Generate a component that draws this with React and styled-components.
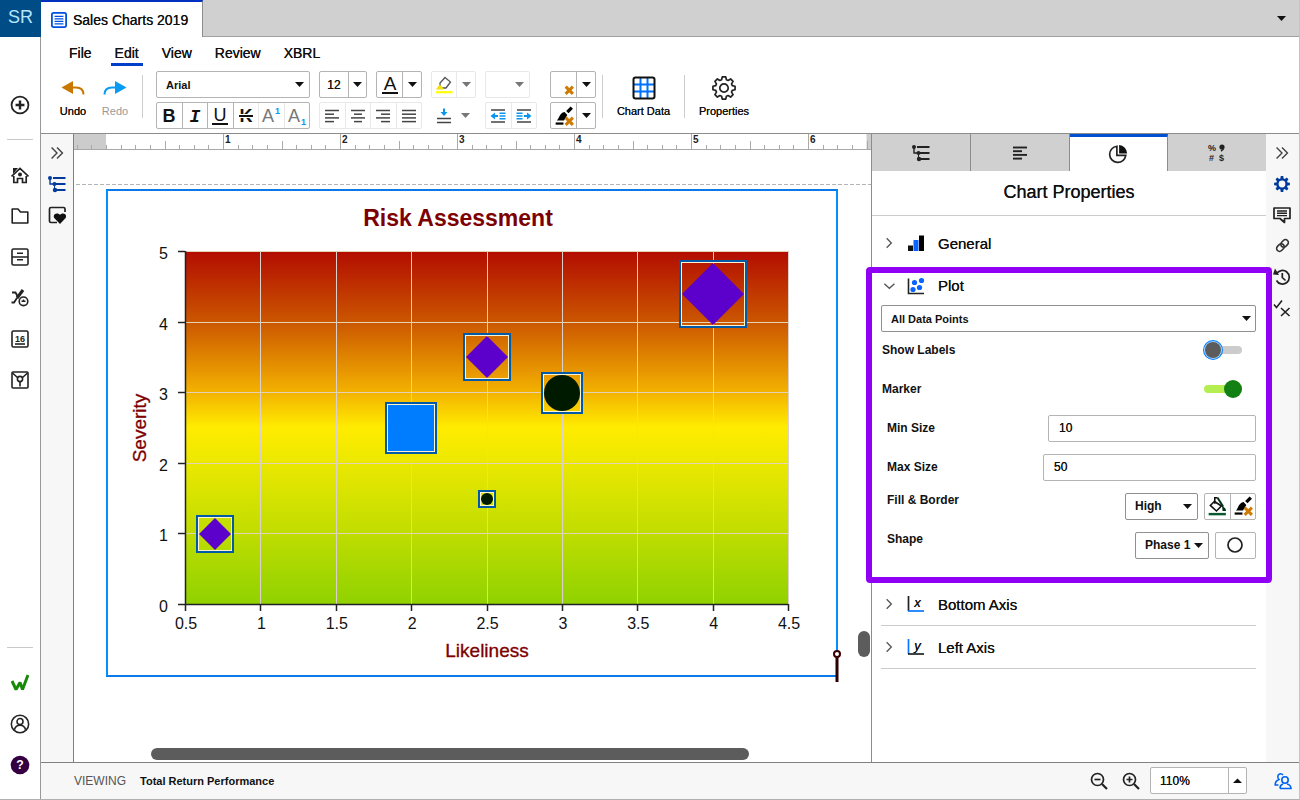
import styled, { createGlobalStyle, css } from 'styled-components';

const GlobalStyle = createGlobalStyle`
  * { box-sizing: border-box; }
  body {
    margin: 0;
    font-family: "Liberation Sans", Arial, sans-serif;
    font-size: 12px;
    color: #111;
    background: #fff;
  }
  button, input, select {
    font: inherit;
    color: inherit;
    margin: 0;
    padding: 0;
    border: 0;
    background: none;
  }
  svg { display: block; flex: none; }
`;

const crisp = css`
  text-shadow: 0 0 0 currentColor;
`;

/* ---------- shell ---------- */

const Shell = styled.div`
  display: flex;
  min-height: 100vh;
  border-right: 1px solid #c4c4c4;
  border-bottom: 1px solid #b0b0b0;
`;

const SideNav = styled.nav`
  width: 41px;
  flex: none;
  display: flex;
  flex-direction: column;
  border-right: 1px solid #999;
`;

const Logo = styled.div`
  width: 41px;
  height: 37px;
  padding-bottom: 2px;
  display: flex;
  align-items: center;
  justify-content: center;
  background: #004c86;
  color: #b4e6ff;
  font-size: 18px;
`;

const NavGroup = styled.div`
  display: flex;
  flex-direction: column;
  align-items: center;
  padding: ${p => p.$pad || '0'};
  margin-top: ${p => (p.$bottom ? 'auto' : '0')};
`;

const NavButton = styled.button`
  width: 40px;
  height: 41px;
  display: flex;
  align-items: center;
  justify-content: center;
`;

const NavRule = styled.hr`
  width: 26px;
  margin: 0;
  border: 0;
  border-top: 1px solid #c8c8c8;
`;

const Main = styled.div`
  flex: 1;
  min-width: 0;
  display: flex;
  flex-direction: column;
`;

/* ---------- document tabs ---------- */

const DocBar = styled.div`
  height: 37px;
  display: flex;
  justify-content: space-between;
  background: #d0d0d0;
`;

const DocTab = styled.div`
  display: flex;
  align-items: center;
  gap: 6px;
  padding: 0 10px;
  width: 162px;
  background: #fff;
  border-top: 2px solid #0030c0;
  border-right: 1px solid #8c8c8c;
  font-size: 14px;
  white-space: nowrap;
  ${crisp}
`;

const DocSpace = styled.div`
  flex: 1;
  display: flex;
  justify-content: flex-end;
  border-bottom: 1px solid #a0a0a0;
`;

const DocMenu = styled.button`
  width: 35px;
  display: flex;
  align-items: center;
  justify-content: center;
`;

/* ---------- menu + toolbar ---------- */

const MenuBar = styled.nav`
  display: flex;
  gap: 15px;
  padding: 5px 24px 0;
`;

const MenuItem = styled.button`
  height: 24px;
  padding: 0 4px;
  font-size: 14px;
  border-bottom: 3px solid ${p => (p.$active ? '#0040c8' : 'transparent')};
  ${crisp}
`;

const Toolbar = styled.div`
  display: flex;
  align-items: flex-start;
  padding: 5px 11px 4px;
  border-bottom: 1px solid #8c8c8c;
`;

const Tool = styled.button`
  width: ${p => p.$w}px;
  height: 58px;
  padding-top: 5px;
  display: flex;
  flex-direction: column;
  align-items: center;
  gap: 4px;
  font-size: 11px;
  line-height: 14px;
  color: ${p => (p.$off ? '#999' : '#111')};
  white-space: nowrap;
  ${p => !p.$off && crisp}
`;

const Divider = styled.div`
  width: 1px;
  height: 43px;
  margin: ${p => p.$m};
  background: #ccc;
`;

const Columns = styled.div`
  display: flex;
  gap: 9px;
`;

const Column = styled.div`
  width: ${p => p.$w}px;
  display: flex;
  flex-direction: column;
  gap: 4px;
  margin-left: ${p => (p.$gap ? '4px' : '0')};
`;

const Pair = styled.div`
  display: flex;
  justify-content: space-between;
`;

const Group = styled.div`
  width: ${p => (p.$w ? p.$w + 'px' : '100%')};
  height: 27px;
  display: flex;
  border: 1px solid ${p => (p.$plain ? 'transparent' : p.$off ? '#e8e8e8' : '#b4b4b4')};
  border-radius: 2px;
  background: #fff;
`;

const Cell = styled.button`
  flex: ${p => (p.$w ? 'none' : 1)};
  width: ${p => (p.$w ? p.$w + 'px' : 'auto')};
  min-width: 0;
  display: flex;
  align-items: center;
  justify-content: center;
  border-left: ${p => (p.$open ? '0' : '1px')} solid ${p => (p.$off ? '#e8e8e8' : '#b4b4b4')};
  &:first-child { border-left: 0; }
`;

const SizeInput = styled.input`
  width: 28px;
  text-align: center;
  ${crisp}
`;

const SelectBox = styled.div`
  display: flex;
  align-items: center;
  width: ${p => (p.$w ? p.$w + 'px' : '100%')};
  height: 27px;
  padding-right: ${p => p.$end || 5}px;
  border: 1px solid ${p => p.$line || '#b4b4b4'};
  border-radius: 2px;
  background: #fff;
  select {
    appearance: none;
    flex: 1;
    min-width: 0;
    height: 100%;
    padding-left: 9px;
    font-weight: bold;
    font-size: ${p => p.$size || 11}px;
    outline: 0;
  }
`;

/* ---------- workspace ---------- */

const Workspace = styled.div`
  flex: 1;
  display: flex;
`;

const SlimRail = styled.aside`
  width: 33px;
  flex: none;
  padding-top: 3px;
  background: #f7f7f7;
  border-right: ${p => (p.$line ? '1px solid #808080' : '0')};
`;

const SlimButton = styled.button`
  width: 32px;
  height: 31px;
  display: flex;
  align-items: center;
  justify-content: center;
`;

const Canvas = styled.main`
  flex: 1;
  min-width: 0;
  position: relative;
  overflow: hidden;
`;

const RulerBox = styled.div`
  height: 16px;
  overflow: hidden;
  border-bottom: 1px solid #a8a8a8;
`;

const PageEdge = styled.div`
  height: 1px;
  margin-top: 34px;
  background: repeating-linear-gradient(90deg, #fff 0 2px, #b4b4b4 2px 6px);
`;

const Frame = styled.section`
  position: relative;
  width: 732px;
  margin: 4px 0 0 32px;
  border: 2px solid #0090ff;
  border-top-color: #0a7ae8;
  border-bottom-color: #0a7ae8;
`;

const Caret = styled.svg`
  position: absolute;
  right: -6px;
  bottom: -7px;
`;

const ScrollThumb = styled.div`
  position: absolute;
  border-radius: 6px;
  background: #5c5c5c;
  ${p => (p.$vertical
    ? 'right: 1px; bottom: 105px; width: 12px; height: 26px;'
    : 'left: 77px; right: 122px; bottom: 2px; height: 12px;')}
`;

/* ---------- properties panel ---------- */

const Panel = styled.aside`
  width: 395px;
  flex: none;
  border-left: 1px solid #8c8c8c;
`;

const PanelTabs = styled.div`
  display: flex;
  height: 37px;
`;

const PanelTab = styled.button`
  flex: 1;
  display: flex;
  align-items: center;
  justify-content: center;
  background: ${p => (p.$active ? '#fff' : '#d0d0d0')};
  border-top: ${p => (p.$active ? '3px solid #0050d0' : '0')};
  border-right: 1px solid #8c8c8c;
  &:last-child { border-right: 0; }
`;

const PanelTitle = styled.h2`
  height: 45px;
  margin: 0;
  display: flex;
  align-items: center;
  justify-content: center;
  padding-bottom: 2px;
  font-size: 18px;
  font-weight: normal;
  border-bottom: 1px solid #ccc;
  ${crisp}
`;

const PanelBody = styled.div`
  padding-top: 6px;
`;

const SectionHead = styled.button`
  width: calc(100% - 19px);
  height: ${p => (p.$open ? 32 : 43)}px;
  margin: 0 10px 0 9px;
  padding-bottom: ${p => (p.$open ? 6 : 0)}px;
  display: flex;
  align-items: center;
  font-size: 15px;
  border-bottom: 1px solid ${p => (p.$line ? '#ccc' : 'transparent')};
  ${crisp}
  svg:first-child { margin: 0 11px 0 1px; }
  svg + svg { margin-right: 13px; }
`;

const Highlight = styled.section`
  position: relative;
  z-index: 1;
  margin: 2px -6px 0;
  padding-bottom: 11px;
  border: 6px solid #9000f5;
  border-radius: 4px;
`;

const Fields = styled.div`
  padding: 0 10px 0 9px;
`;

const Field = styled.div`
  display: flex;
  align-items: center;
  justify-content: space-between;
  height: 39px;
  padding-bottom: 3px;
  padding-left: ${p => (p.$nested ? 6 : 1)}px;
`;

const FieldLabel = styled.label`
  font-weight: bold;
  padding-bottom: ${p => (p.$raised ? 12 : 0)}px;
`;

const Controls = styled.div`
  display: flex;
  gap: 6px;
`;

const TextInput = styled.input`
  width: ${p => p.$w}px;
  height: 27px;
  padding: 0 10px;
  border: 1px solid #b4b4b4;
  border-radius: 2px;
  ${crisp}
`;

const Switch = styled.input`
  appearance: none;
  position: relative;
  width: 38px;
  height: 8px;
  margin-right: 14px;
  border-radius: 4px;
  background: #ccc;
  &::before {
    content: '';
    position: absolute;
    top: -4px;
    left: 1px;
    width: 16px;
    height: 16px;
    border-radius: 50%;
    background: #5c5c5c;
    box-shadow: 0 0 0 1px #a8d4ff, 0 0 0 2px #0080ff;
  }
  &:checked { background: #b4ee50; }
  &:checked::before {
    top: -5px;
    left: 20px;
    width: 18px;
    height: 18px;
    background: #128012;
    box-shadow: none;
  }
`;

/* ---------- status bar ---------- */

const StatusBar = styled.footer`
  height: 37px;
  display: flex;
  align-items: center;
  padding: 0 0 1px 33px;
  background: #f7f7f7;
  border-top: 1px solid #808080;
`;

const Mode = styled.span`
  color: #555;
  margin-right: 14px;
`;

const DocName = styled.span`
  flex: 1;
  font-size: 11px;
  font-weight: bold;
`;

const IconButton = styled.button`
  width: 32px;
  height: 27px;
  display: flex;
  align-items: center;
  justify-content: center;
`;

const ZoomInput = styled.input`
  width: 77px;
  padding-left: 9px;
  ${crisp}
`;

const ZoomBox = styled.div`
  display: flex;
  margin: 0 20px 0 3px;
`;

/* ---------- icons ---------- */

function Icon({ size = 18, children, color = '#222', width = 2 }) {
  return (
    <svg width={size} height={size} viewBox="0 0 18 18" fill="none" stroke={color} strokeWidth={width} aria-hidden="true">
      {children}
    </svg>
  );
}

const Down = ({ color = '#111', up }) => (
  <svg width="9" height="5" viewBox="0 0 9 5" aria-hidden="true">
    <path d={up ? 'M0 5L4.5 0.5L9 5Z' : 'M0 0H9L4.5 5Z'} fill={color} />
  </svg>
);

const PlusIcon = () => (
  <Icon size={20}><circle cx="9" cy="9" r="7.6" strokeWidth="1.6" /><path d="M9 5V13M5 9H13" strokeWidth="2.2" /></Icon>
);

const HomeIcon = () => (
  <Icon width={1.7}>
    <path d="M0.5 10.5L9 2.5L17.5 10.5M2.8 10V16.5H6.5V12.5H11.5V16.5H15.2V10" />
    <path d="M2 2H7L2 8Z" fill="#222" stroke="none" />
    <circle cx="9" cy="8.5" r="2" fill="#222" stroke="none" />
  </Icon>
);

const FolderIcon = () => (
  <Icon width={1.6}><path d="M1.2 2H7L9.5 5H16.8V16H1.2Z" strokeLinejoin="round" /></Icon>
);

const DrawerIcon = () => (
  <Icon width={1.6}>
    <rect x="1" y="1" width="16" height="16" rx="1.5" />
    <path d="M1 9H17M6 5.3H12M6 11.7H12" />
  </Icon>
);

const TaskIcon = () => (
  <Icon width={1.8}>
    <path d="M1 3.5H4.5L7.5 9M6 9L3 13.5H0.5" />
    <path d="M12 1L6 9" strokeWidth="3.2" />
    <circle cx="12.5" cy="12.3" r="4.3" strokeWidth="1.6" />
    <path d="M10.5 12.3H14.5M12.5 10.5V12.5" strokeWidth="1.4" />
  </Icon>
);

const CalendarIcon = () => (
  <Icon width={1.6}>
    <rect x="1" y="1" width="16" height="16" rx="1.5" />
    <path d="M4 14H14" />
    <text x="9" y="11.5" fontSize="9" fontWeight="bold" textAnchor="middle" fill="#222" stroke="none">16</text>
  </Icon>
);

const MailIcon = () => (
  <Icon width={1.6}>
    <rect x="1" y="1" width="16" height="16" rx="1" />
    <path d="M1.5 2L6.5 6.5M16.5 2L11.5 6.5M9 10.5V15.5" />
    <circle cx="9" cy="8" r="2.6" />
  </Icon>
);

const WIcon = () => (
  <Icon color="#188a08" width={3}><path d="M1 7L5 15.5L9 8.5L11.5 15.5L17 1" strokeLinejoin="bevel" /></Icon>
);

const UserIcon = () => (
  <Icon size={20} width={1.4}>
    <circle cx="9" cy="9" r="7.8" />
    <circle cx="9" cy="6.8" r="2.7" />
    <path d="M4 14.2C4.8 11 7 10.2 9 10.2S13.2 11 14 14.2" />
  </Icon>
);

const HelpIcon = () => (
  <Icon size={20}>
    <circle cx="9" cy="9" r="8.4" fill="#350042" stroke="none" />
    <text x="9" y="13" fontSize="11" fontWeight="bold" textAnchor="middle" fill="#fff" stroke="none">?</text>
  </Icon>
);

const DocIcon = () => (
  <Icon size={16} color="#0050e0" width={1.5}>
    <rect x="1" y="1" width="16" height="16" rx="2" strokeWidth="2" />
    <path d="M4 5H14M4 7.8H14M4 10.6H14M4 13.4H14" />
  </Icon>
);

const UndoIcon = ({ flip, color }) => (
  <svg width="24" height="24" viewBox="0 0 24 24" aria-hidden="true">
    <g transform={flip ? 'matrix(-1 0 0 1 24 0)' : undefined}>
      <path d="M0.5 11.5L12 5V18Z" fill={color} />
      <path d="M11 11.5H15C19.5 11.5 22.5 14 22.5 18.5" fill="none" stroke={color} strokeWidth="2" />
    </g>
  </svg>
);

const Chevrons = () => (
  <Icon size={14} width={1.8} color="#444"><path d="M2 2L9 9L2 16M9 2L16 9L9 16" /></Icon>
);

const TreeIcon = ({ color = '#222' }) => (
  <Icon color={color} width={2}>
    <path d="M5 3H17.5M8 9H17.5M9 15H17.5" />
    <path d="M2 3V9H6" strokeWidth="1.4" />
    <path d="M6.5 9V15" strokeWidth="1" />
    <g fill={color} stroke="none">
      <circle cx="2" cy="3" r="2" />
      <circle cx="6.5" cy="9" r="2" />
      <circle cx="7" cy="15" r="2.2" />
    </g>
  </Icon>
);

const HeartIcon = () => (
  <Icon width={1.7}>
    <path d="M17 6V3Q17 1.5 15.5 1.5H3Q1.5 1.5 1.5 3V15Q1.5 16.5 3 16.5H9" />
    <path d="M12 18L6.2 12C4.2 8.2 9 5.8 12 8.8C15 5.8 19.6 8.2 17.6 12Z" fill="#111" stroke="none" />
  </Icon>
);

const lineSets = {
  left: [[2, 16], [2, 11], [2, 16], [2, 11]],
  center: [[2, 16], [5, 13], [2, 16], [5, 13]],
  right: [[2, 16], [7, 16], [2, 16], [7, 16]],
  full: [[2, 16], [2, 16], [2, 16], [2, 16]],
};

const Lines = ({ kind, color = '#444', width = 1.5 }) => (
  <Icon color={color} width={width}>
    {lineSets[kind].map(([a, b], i) => (
      <path key={i} d={`M${a} ${3.5 + i * 3.7}H${b}`} />
    ))}
  </Icon>
);

const LetterIcon = ({ text, bold, underline, strike, sup, sub, italic, size = 18, color = '#111' }) => (
  <svg width="22" height="22" viewBox="0 0 22 22" aria-hidden="true">
    <text
      x={sup || sub ? 8 : 11}
      y={underline ? 16 : 17}
      fontSize={size}
      textAnchor="middle"
      fill={color}
      fontWeight={bold ? 'bold' : 'normal'}
      fontStyle={italic ? 'italic' : 'normal'}
      fontFamily={italic ? 'Liberation Mono, monospace' : undefined}
    >
      {text}
    </text>
    {underline && <rect x="3" y="18" width="16" height="2" fill={color} />}
    {strike && (
      <>
        <rect x="3" y="9" width="16" height="4" fill="#fff" />
        <rect x="4" y="10" width="14" height="2" fill={color} />
      </>
    )}
    {sup && <text x="15" y="9" fontSize="9" fontWeight="bold" fill="#0a96f0">1</text>}
    {sub && <text x="15" y="20" fontSize="9" fontWeight="bold" fill="#0a96f0">1</text>}
  </svg>
);

const HighlighterIcon = () => (
  <Icon color="#555" width={1.3}>
    <path d="M10 1.5L15.5 6L11 12H7L5 10.5V7Z" />
    <path d="M1 13.5L4.5 8.5L8.5 12.5V13.5Z" fill="#f5e000" stroke="none" />
    <path d="M1 16.2H17.5" stroke="#ffff00" strokeWidth="2.2" />
  </Icon>
);

const VAlignIcon = () => (
  <Icon color="#444" width={1.4}>
    <path d="M2 11.5H16M2 15.5H16" />
    <path d="M9 1.5V7" stroke="#0a96f0" strokeWidth="2" />
    <path d="M5.5 5H12.5L9 9Z" fill="#0a96f0" stroke="none" />
  </Icon>
);

const IndentIcon = ({ out }) => (
  <Icon color="#444" width={1.3}>
    <path d="M2 3H16M2 15H16" />
    <g stroke="#0a96f0">
      <path d={out ? 'M3 9H9' : 'M9 9H15'} strokeWidth="2" />
      <path d={out ? 'M1.5 9L6 5.5V12.5Z' : 'M16.5 9L12 5.5V12.5Z'} fill="#0a96f0" stroke="none" />
      <path
        d={out ? 'M10.5 6.2H16.5M10.5 9H16.5M10.5 11.8H16.5' : 'M1.5 6.2H7.5M1.5 9H7.5M1.5 11.8H7.5'}
        strokeWidth="1.5"
      />
    </g>
  </Icon>
);

const cross = <path d="M10.5 10.5L17 17M17 10.5L10.5 17" stroke="#cf7a00" strokeWidth="2.7" />;

const ClearIcon = () => <Icon size={20}>{cross}</Icon>;

const BrushIcon = () => (
  <Icon size={20} color="#000">
    <path d="M16 1.5L12 5.5" strokeWidth="3" />
    <path d="M9.5 5.5L12 8L9 13H2.5C5 11.5 4.5 6.5 9.5 5.5Z" fill="#000" stroke="none" />
    <path d="M1.5 15.8H8.5" />
    {cross}
  </Icon>
);

const BucketIcon = () => (
  <Icon size={20} color="#111" width={1.4}>
    <path d="M6 4.5L13 9L8.5 13.5L3 8.5L7.5 4M7 7V1.5H9.5" />
    <path d="M9.5 1.5L14.5 9.5" strokeWidth="1.8" stroke="#003418" />
    <path d="M13.5 8L17 12V13.5H14Z" fill="#003418" stroke="none" />
    <path d="M1.5 16.3H17" strokeWidth="2.2" stroke="#0a5a30" />
  </Icon>
);

const GridIcon = () => (
  <svg width="24" height="24" viewBox="0 0 24 24" fill="none" aria-hidden="true">
    <path d="M8.5 2V22M15.5 2V22M2 8.5H22M2 15.5H22" stroke="#0070ff" strokeWidth="2" />
    <rect x="1.5" y="1.5" width="21" height="21" rx="2" stroke="#111" strokeWidth="2" />
  </svg>
);

const gearPath = (teeth, outer, inner) => {
  const pts = [];
  for (let i = 0; i < teeth; i++) {
    [[-0.36, inner], [-0.2, outer], [0.2, outer], [0.36, inner]].forEach(([o, r]) => {
      const a = ((i + o) / teeth) * Math.PI * 2;
      pts.push(`${(Math.sin(a) * r).toFixed(2)} ${(-Math.cos(a) * r).toFixed(2)}`);
    });
  }
  return `M${pts.join('L')}Z`;
};

const GearIcon = () => (
  <svg width="26" height="24" viewBox="-13 -12 26 24" fill="none" stroke="#222" strokeWidth="1.7" strokeLinejoin="round" aria-hidden="true">
    <path d={gearPath(8, 11.2, 8.6)} />
    <circle r="4.2" />
  </svg>
);

const SmallGear = () => (
  <svg width="16" height="16" viewBox="-8 -8 16 16" aria-hidden="true">
    <path d={gearPath(8, 8, 5.8)} fill="#003a9c" />
    <circle r="3.4" fill="#f7f7f7" />
  </svg>
);

const CommentIcon = () => (
  <Icon width={1.7}>
    <path d="M1 2H17V12.5H11.5V16.5L7 12.5H1Z" strokeLinejoin="round" />
    <path d="M4 5H14M4 7.3H14M4 9.6H14" strokeWidth="1.4" />
  </Icon>
);

const LinkIcon = () => (
  <Icon size={15} width={1.9} color="#333">
    <rect x="-3.5" y="-5" width="7" height="10" rx="3.5" transform="translate(11.5 6.5) rotate(45)" />
    <rect x="-3.5" y="-5" width="7" height="10" rx="3.5" transform="translate(6.5 11.5) rotate(45)" />
  </Icon>
);

const HistoryIcon = () => (
  <Icon width={1.7}>
    <path d="M3.5 6A6.8 6.8 0 1 1 3.5 12.5" />
    <path d="M2 0.5L6 7L0 6.5Z" fill="#222" stroke="none" />
    <path d="M9.3 5V9.5L12.5 12.5" />
  </Icon>
);

const CheckCrossIcon = () => (
  <Icon width={1.6}><path d="M1 5.5L3.5 8.5L9 1.5M8 9L16.5 17M16.5 9L8 17" /></Icon>
);

const PieIcon = () => (
  <Icon size={20} width={1.5}>
    <path d="M8 2A7.3 7.3 0 1 0 16 10.3H8Z" />
    <path d="M10 1A7.5 7.5 0 0 1 17.2 8.5H10Z" fill="#111" stroke="none" />
  </Icon>
);

const SymbolsIcon = () => (
  <svg width="20" height="20" viewBox="0 0 20 20" fontSize="9" fontWeight="bold" fill="#222" aria-hidden="true">
    <text x="1" y="8">%</text>
    <circle cx="15" cy="4" r="2.6" />
    <path d="M16 4.5Q16.5 7 14 8" stroke="#222" strokeWidth="1.5" fill="none" />
    <text x="2" y="18">#</text>
    <text x="12" y="18">$</text>
  </svg>
);

const Chevron = ({ open }) => (
  <Icon size={14} width={1.7} color="#555"><path d={open ? 'M3 6L9.5 12L16 6' : 'M6 3L12 9L6 15'} /></Icon>
);

const BarsIcon = () => (
  <Icon>
    <g stroke="none">
      <rect x="1" y="11.5" width="5" height="5.5" fill="#111" />
      <rect x="6.5" y="6" width="5" height="11" fill="#0a64ff" />
      <rect x="12" y="1.5" width="5" height="15.5" fill="#000" />
    </g>
  </Icon>
);

const ScatterIcon = () => (
  <Icon width={1.6}>
    <path d="M1.5 1.5V16.5H17" />
    <g fill="#0a64ff" stroke="none">
      <circle cx="7.5" cy="5.5" r="2.6" />
      <circle cx="14.5" cy="3.5" r="2.6" />
      <circle cx="6" cy="12.5" r="2.6" />
      <circle cx="12.5" cy="10.5" r="2.6" />
    </g>
  </Icon>
);

const AxisIcon = ({ letter }) => (
  <Icon width={1.7}>
    <path d="M1.5 1V16" stroke={letter === 'y' ? '#0a78ff' : '#222'} />
    <path d="M1 16H17" stroke={letter === 'x' ? '#0a78ff' : '#222'} />
    <text x="10.5" y="11.5" fontSize="13" fontStyle="italic" textAnchor="middle" fill="#111" stroke="none">{letter}</text>
  </Icon>
);

const ZoomIcon = ({ plus }) => (
  <Icon width={1.7}>
    <circle cx="7.5" cy="7.5" r="6" />
    <path d="M12 12L17 17" strokeWidth="2.2" />
    <path d={plus ? 'M4.5 7.5H10.5M7.5 4.5V10.5' : 'M4.5 7.5H10.5'} />
  </Icon>
);

const PeopleIcon = () => (
  <Icon color="#0064f0" width={1.6}>
    <circle cx="11" cy="8" r="3.2" />
    <path d="M6 16.5H17C17 13.5 15 12.5 13 12M9 12C7 12.5 6 13.5 6 16.5" />
    <path d="M9 3C7 0.5 3.5 2 3.8 5C4 6.5 5 7.5 5 7.5C2 8.5 1.2 10 1.2 13H4.5" />
  </Icon>
);

/* ---------- ruler ---------- */

const INCH = 117;
const RULER_START = 32;

function Ruler() {
  const ticks = [];
  for (let i = -2; i <= 52; i++) {
    const x = Math.round(RULER_START + (i * INCH) / 8);
    const height = i > 0 && i % 8 === 0 ? 16 : i > 0 && i % 4 === 0 ? 9 : 5;
    ticks.push(<rect key={i} x={x} y={16 - height} width="1" height={height} fill="#aaa" />);
  }
  return (
    <RulerBox>
      <svg width="100%" height="16" aria-hidden="true">
        <rect width={RULER_START} height="16" fill="#ccc" />
        <rect x={RULER_START + 6.5 * INCH} width="100%" height="16" fill="#ccc" />
        {ticks}
        {[1, 2, 3, 4, 5, 6].map(n => (
          <text key={n} x={RULER_START + n * INCH + 2} y="9" fontSize="10" fontWeight="bold" fill="#222">{n}</text>
        ))}
      </svg>
    </RulerBox>
  );
}

/* ---------- chart ---------- */

const points = [
  { x: 0.7, y: 1, shape: 'diamond', size: 16, box: 18 },
  { x: 2, y: 2.5, shape: 'square', size: 23, box: 25 },
  { x: 2.5, y: 3.5, shape: 'diamond', size: 21, box: 23 },
  { x: 2.5, y: 1.5, shape: 'circle', size: 6, box: 8 },
  { x: 3, y: 3, shape: 'circle', size: 18, box: 20 },
  { x: 4, y: 4.4, shape: 'diamond', size: 31, box: 33 },
];

const plot = { left: 77, right: 680, top: 60, bottom: 413 };
const sx = v => plot.left + ((v - 0.5) / 4) * (plot.right - plot.left);
const sy = v => plot.bottom - (v / 5) * (plot.bottom - plot.top);
const xTicks = [0.5, 1, 1.5, 2, 2.5, 3, 3.5, 4, 4.5];
const yTicks = [0, 1, 2, 3, 4, 5];

function Marker({ x, y, shape, size, box }) {
  const cx = Math.round(sx(x));
  const cy = Math.ceil(sy(y));
  return (
    <g>
      {shape === 'diamond' && <path d={`M${cx - size} ${cy}L${cx} ${cy - size}L${cx + size} ${cy}L${cx} ${cy + size}Z`} fill="#5c00cc" />}
      {shape === 'square' && <rect x={cx - size} y={cy - size} width={size * 2} height={size * 2} fill="#007dff" />}
      {shape === 'circle' && <circle cx={cx} cy={cy} r={size} fill="#001a00" />}
      <rect x={cx - box} y={cy - box} width={box * 2} height={box * 2} fill="none" stroke="#005aa8" strokeWidth="2" />
      <rect x={cx - box + 1.5} y={cy - box + 1.5} width={box * 2 - 3} height={box * 2 - 3} fill="none" stroke="#fff4cc" />
    </g>
  );
}

function RiskChart() {
  return (
    <svg width="728" height="484" viewBox="0 0 728 484" role="img" aria-label="Risk Assessment">
      <defs>
        <linearGradient id="risk" x1="0" y1="0" x2="0" y2="1">
          <stop offset="0" stopColor="#b20c00" />
          <stop offset="0.2" stopColor="#cb5600" />
          <stop offset="0.4" stopColor="#f3b200" />
          <stop offset="0.5" stopColor="#ffec00" />
          <stop offset="0.6" stopColor="#ebe800" />
          <stop offset="0.8" stopColor="#bfdd00" />
          <stop offset="1" stopColor="#90d200" />
        </linearGradient>
      </defs>
      <text x="350" y="35" fontSize="23" fontWeight="bold" textAnchor="middle" fill="#7c0000">Risk Assessment</text>
      <rect x={plot.left} y={plot.top} width={plot.right - plot.left} height={plot.bottom - plot.top} fill="url(#risk)" />
      {xTicks.slice(1).map(v => (
        <rect key={v} x={Math.round(sx(v))} y={plot.top} width="1" height={plot.bottom - plot.top} fill="#dcd0cc" />
      ))}
      {yTicks.slice(1).map(v => (
        <rect key={v} x={plot.left} y={Math.round(sy(v))} width={plot.right - plot.left} height="1" fill="#e4d2b4" />
      ))}
      <g stroke="#222" strokeWidth="1.5" fill="none">
        <path d={`M${plot.left + 0.5} ${plot.top}V${plot.bottom + 0.5}H${plot.right}`} />
        {xTicks.map(v => <path key={v} d={`M${Math.round(sx(v)) + 0.5} ${plot.bottom}V${plot.bottom + 7}`} />)}
        {yTicks.map(v => <path key={v} d={`M${plot.left - 7} ${Math.round(sy(v)) + 0.5}H${plot.left}`} />)}
      </g>
      <g fontSize="16" fill="#111">
        {xTicks.map(v => <text key={v} x={sx(v) + 1} y="438" textAnchor="middle">{v}</text>)}
        {yTicks.map(v => <text key={v} x="60" y={sy(v) + 8} textAnchor="end">{v}</text>)}
      </g>
      <g fontSize="19" fill="#7c0000" stroke="#7c0000" strokeWidth="0.3" textAnchor="middle">
        <text x="379" y="466">Likeliness</text>
        <text transform="translate(38 237) rotate(-90)">Severity</text>
      </g>
      {points.map(p => <Marker key={`${p.x}-${p.y}`} {...p} />)}
    </svg>
  );
}

/* ---------- sections of the page ---------- */

function Sidebar() {
  return (
    <SideNav>
      <Logo>SR</Logo>
      <NavGroup $pad="47px 0 14px"><NavButton aria-label="Create"><PlusIcon /></NavButton></NavGroup>
      <NavGroup>
        <NavRule />
      </NavGroup>
      <NavGroup $pad="14px 0 0">
        <NavButton aria-label="Home"><HomeIcon /></NavButton>
        <NavButton aria-label="Files"><FolderIcon /></NavButton>
        <NavButton aria-label="Archive"><DrawerIcon /></NavButton>
        <NavButton aria-label="Tasks"><TaskIcon /></NavButton>
        <NavButton aria-label="Calendar"><CalendarIcon /></NavButton>
        <NavButton aria-label="Certifications"><MailIcon /></NavButton>
      </NavGroup>
      <NavGroup $bottom $pad="0 0 14px">
        <NavRule />
        <NavGroup $pad="14px 0 0">
          <NavButton aria-label="Workspace"><WIcon /></NavButton>
          <NavButton aria-label="Account"><UserIcon /></NavButton>
          <NavButton aria-label="Help"><HelpIcon /></NavButton>
        </NavGroup>
      </NavGroup>
    </SideNav>
  );
}

function EditToolbar() {
  return (
    <Toolbar>
      <Tool $w={42}><UndoIcon color="#c87800" />Undo</Tool>
      <Tool $w={42} $off><UndoIcon color="#0a9cf5" flip />Redo</Tool>
      <Divider $m="4px 13px 0 6px" />
      <Columns>
        <Column $w={154}>
          <SelectBox>
            <select aria-label="Font" defaultValue="Arial"><option>Arial</option></select>
            <Down />
          </SelectBox>
          <Group>
            <Cell aria-label="Bold"><LetterIcon text="B" bold /></Cell>
            <Cell aria-label="Italic"><LetterIcon text="I" italic bold /></Cell>
            <Cell aria-label="Underline"><LetterIcon text="U" underline /></Cell>
            <Cell aria-label="Strikethrough"><LetterIcon text="K" strike bold /></Cell>
            <Cell aria-label="Superscript" $off><LetterIcon text="A" sup color="#777" /></Cell>
            <Cell aria-label="Subscript" $off><LetterIcon text="A" sub color="#777" /></Cell>
          </Group>
        </Column>
        <Column $w={103}>
          <Pair>
            <Group $w={48}>
              <SizeInput aria-label="Font size" defaultValue="12" />
              <Cell aria-label="Font sizes" $w={18}><Down /></Cell>
            </Group>
            <Group $w={46}>
              <Cell aria-label="Text color"><LetterIcon text="A" underline size={19} /></Cell>
              <Cell aria-label="Text colors" $w={19}><Down /></Cell>
            </Group>
          </Pair>
          <Group $off>
            <Cell aria-label="Align left" $off><Lines kind="left" /></Cell>
            <Cell aria-label="Align center" $off><Lines kind="center" /></Cell>
            <Cell aria-label="Align right" $off><Lines kind="right" /></Cell>
            <Cell aria-label="Justify" $off><Lines kind="full" /></Cell>
          </Group>
        </Column>
        <Column $w={45}>
          <Group $off>
            <Cell aria-label="Highlight" $off><HighlighterIcon /></Cell>
            <Cell aria-label="Highlight colors" $off $w={19}><Down color="#777" /></Cell>
          </Group>
          <Group $plain>
            <Cell aria-label="Vertical align"><VAlignIcon /></Cell>
            <Cell aria-label="Vertical align options" $open $w={19}><Down color="#777" /></Cell>
          </Group>
        </Column>
        <Column $w={52}>
          <Group $off $w={45}>
            <Cell aria-label="Borders" $off />
            <Cell aria-label="Border options" $open $w={19}><Down color="#777" /></Cell>
          </Group>
          <Group $off>
            <Cell aria-label="Outdent" $off><IndentIcon out /></Cell>
            <Cell aria-label="Indent" $off><IndentIcon /></Cell>
          </Group>
        </Column>
        <Column $w={46} $gap>
          <Group>
            <Cell aria-label="Clear"><ClearIcon /></Cell>
            <Cell aria-label="Clear options" $w={19}><Down /></Cell>
          </Group>
          <Group>
            <Cell aria-label="Clear formatting"><BrushIcon /></Cell>
            <Cell aria-label="Clear formatting options" $w={19}><Down /></Cell>
          </Group>
        </Column>
      </Columns>
      <Divider $m="4px 0 0 6px" />
      <Tool $w={81}><GridIcon />Chart Data</Tool>
      <Divider $m="4px 0 0" />
      <Tool $w={78}><GearIcon />Properties</Tool>
    </Toolbar>
  );
}

function PropertiesPanel() {
  return (
    <Panel>
      <PanelTabs>
        <PanelTab aria-label="Outline"><TreeIcon /></PanelTab>
        <PanelTab aria-label="Paragraph"><Lines kind="left" color="#222" width={1.9} /></PanelTab>
        <PanelTab aria-label="Chart" $active><PieIcon /></PanelTab>
        <PanelTab aria-label="Number format"><SymbolsIcon /></PanelTab>
      </PanelTabs>
      <PanelTitle>Chart Properties</PanelTitle>
      <PanelBody>
        <SectionHead><Chevron /><BarsIcon />General</SectionHead>
        <Highlight>
          <SectionHead $open><Chevron open /><ScatterIcon />Plot</SectionHead>
          <Fields>
            <SelectBox $line="#909090" $end={4}>
              <select aria-label="Data points" defaultValue="All Data Points"><option>All Data Points</option></select>
              <Down />
            </SelectBox>
            <Field>
              <FieldLabel htmlFor="labels">Show Labels</FieldLabel>
              <Switch id="labels" type="checkbox" />
            </Field>
            <Field>
              <FieldLabel htmlFor="marker">Marker</FieldLabel>
              <Switch id="marker" type="checkbox" defaultChecked />
            </Field>
            <Field $nested>
              <FieldLabel htmlFor="min">Min Size</FieldLabel>
              <TextInput id="min" $w={208} defaultValue="10" />
            </Field>
            <Field $nested>
              <FieldLabel htmlFor="max">Max Size</FieldLabel>
              <TextInput id="max" $w={213} defaultValue="50" />
            </Field>
            <Field $nested>
              <FieldLabel htmlFor="fill" $raised>Fill &amp; Border</FieldLabel>
              <Controls>
                <SelectBox $w={73} $size={12} $line="#909090">
                  <select id="fill" defaultValue="High"><option>High</option></select>
                  <Down />
                </SelectBox>
                <Group $w={52}>
                  <Cell aria-label="Fill color"><BucketIcon /></Cell>
                  <Cell aria-label="Clear fill"><BrushIcon /></Cell>
                </Group>
              </Controls>
            </Field>
            <Field $nested>
              <FieldLabel htmlFor="shape" $raised>Shape</FieldLabel>
              <Controls>
                <SelectBox $w={74} $size={12} $line="#909090">
                  <select id="shape" defaultValue="Phase 1"><option>Phase 1</option></select>
                  <Down />
                </SelectBox>
                <Group $w={41}>
                  <Cell aria-label="Marker shape">
                    <Icon width={1.7}><circle cx="8" cy="9" r="7" /></Icon>
                  </Cell>
                </Group>
              </Controls>
            </Field>
          </Fields>
        </Highlight>
        <SectionHead $line><Chevron /><AxisIcon letter="x" />Bottom Axis</SectionHead>
        <SectionHead $line><Chevron /><AxisIcon letter="y" />Left Axis</SectionHead>
      </PanelBody>
    </Panel>
  );
}

function App() {
  return (
    <>
      <GlobalStyle />
      <Shell>
        <Sidebar />
        <Main>
          <DocBar>
            <DocTab><DocIcon />Sales Charts 2019</DocTab>
            <DocSpace>
              <DocMenu aria-label="Open documents"><Down /></DocMenu>
            </DocSpace>
          </DocBar>
          <MenuBar>
            <MenuItem>File</MenuItem>
            <MenuItem $active>Edit</MenuItem>
            <MenuItem>View</MenuItem>
            <MenuItem>Review</MenuItem>
            <MenuItem>XBRL</MenuItem>
          </MenuBar>
          <EditToolbar />
          <Workspace>
            <SlimRail $line>
              <SlimButton aria-label="Expand"><Chevrons /></SlimButton>
              <SlimButton aria-label="Outline"><TreeIcon color="#003a9c" /></SlimButton>
              <SlimButton aria-label="Favorites"><HeartIcon /></SlimButton>
            </SlimRail>
            <Canvas>
              <Ruler />
              <PageEdge />
              <Frame>
                <RiskChart />
                <Caret width="10" height="33" viewBox="0 0 10 33" aria-hidden="true">
                  <rect x="3.5" y="7" width="3" height="26" fill="#2a0000" />
                  <circle cx="5" cy="5" r="3" fill="#fff" stroke="#3a0000" strokeWidth="2" />
                </Caret>
              </Frame>
              <ScrollThumb $vertical />
              <ScrollThumb />
            </Canvas>
            <PropertiesPanel />
            <SlimRail>
              <SlimButton aria-label="Collapse"><Chevrons /></SlimButton>
              <SlimButton aria-label="Settings"><SmallGear /></SlimButton>
              <SlimButton aria-label="Comments"><CommentIcon /></SlimButton>
              <SlimButton aria-label="Links"><LinkIcon /></SlimButton>
              <SlimButton aria-label="History"><HistoryIcon /></SlimButton>
              <SlimButton aria-label="Validation"><CheckCrossIcon /></SlimButton>
            </SlimRail>
          </Workspace>
          <StatusBar>
            <Mode>VIEWING</Mode>
            <DocName>Total Return Performance</DocName>
            <IconButton aria-label="Zoom out"><ZoomIcon /></IconButton>
            <IconButton aria-label="Zoom in"><ZoomIcon plus /></IconButton>
            <ZoomBox>
              <Group $w={97}>
                <ZoomInput aria-label="Zoom level" defaultValue="110%" />
                <Cell aria-label="Zoom levels" $w={18}><Down up /></Cell>
              </Group>
            </ZoomBox>
            <IconButton aria-label="Collaborators"><PeopleIcon /></IconButton>
          </StatusBar>
        </Main>
      </Shell>
    </>
  );
}

export default App;
